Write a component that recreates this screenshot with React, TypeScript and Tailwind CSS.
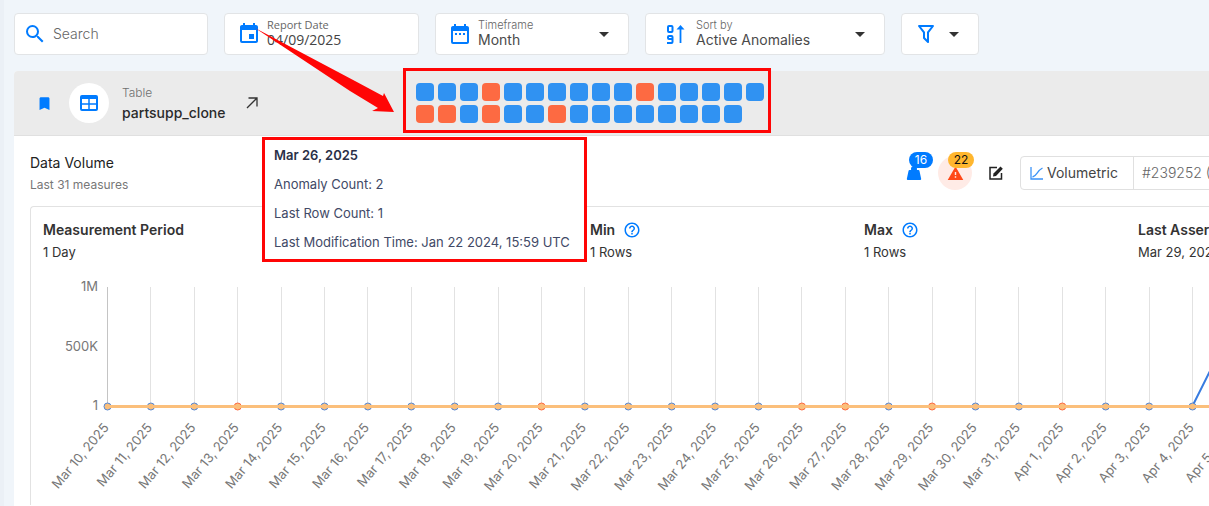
import type { ReactNode } from "react";
import {
  MdArrowDropDown,
  MdBookmark,
  MdDateRange,
  MdEvent,
  MdHelpOutline,
  MdSearch,
  MdWarning,
} from "react-icons/md";

const TOP_ROW = "bbbobbbbbbobbbbb";
const BOTTOM_ROW = "oobobbobbbbbbbb";

const DATES = [
  ...Array.from({ length: 22 }, (_, i) => `Mar ${i + 10}, 2025`),
  ...Array.from({ length: 5 }, (_, i) => `Apr ${i + 1}, 2025`),
];
const ANOMALIES = new Set([3, 10, 16, 17, 19, 22]);
const STEP = 43.4;
const pointX = (i: number) => 76.5 + i * STEP;

function Field({ className, children }: { className: string; children: ReactNode }) {
  return (
    <div
      className={`relative flex h-[42px] shrink-0 items-center rounded border border-[#e2e4e6] bg-white ${className}`}
    >
      {children}
    </div>
  );
}

function Caret() {
  return <MdArrowDropDown className="pointer-events-none size-6 shrink-0 text-[#333]" />;
}

function SortIcon() {
  return (
    <svg viewBox="0 0 20 20" className="size-5 shrink-0" fill="none" stroke="#007bff" strokeWidth="2">
      <rect x="2" y="2" width="4.500" height="6" rx="1" />
      <path d="M6.500 15H3a1 1 0 0 1-1-1v-1a1 1 0 0 1 1-1h2.500a1 1 0 0 1 1 1v5a1 1 0 0 1-1 1H1" />
      <path d="M14.500 19V3" strokeWidth="1.800" />
      <path d="M10.500 5.500L14.500 1L18.500 5.500Z" fill="#007bff" stroke="none" />
    </svg>
  );
}

function FilterIcon() {
  return (
    <svg viewBox="0 0 24 24" className="size-6 shrink-0" fill="#007bff">
      <path d="M15 19.880C15.040 20.180 14.940 20.500 14.710 20.710C14.320 21.100 13.690 21.100 13.300 20.710L9.290 16.700C9.060 16.470 8.960 16.160 9 15.870V10.750L4.210 4.620C3.870 4.190 3.950 3.560 4.380 3.220C4.570 3.080 4.780 3 5 3H19C19.220 3 19.430 3.080 19.620 3.220C20.050 3.560 20.130 4.190 19.790 4.620L15 10.750V19.880M7.040 5L11 10.060V15.580L13 17.580V10.050L16.960 5H7.040Z" />
    </svg>
  );
}

function Toolbar() {
  return (
    <div className="flex gap-4 pt-[13px]">
      <Field className="w-[194px] gap-1.5 pl-2">
        <MdSearch className="size-6 shrink-0 text-[#007bff]" />
        <input
          type="search"
          aria-label="Search"
          placeholder="Search"
          className="w-full min-w-0 bg-transparent text-sm font-light outline-none placeholder:text-[#666]"
        />
      </Field>
      <Field className="w-[195px] gap-1.5 pl-3">
        <MdEvent className="size-6 shrink-0 text-[#007bff]" />
        <div className="flex min-w-0 flex-col font-['Open_Sans',sans-serif]">
          <label htmlFor="date" className="text-[11px] leading-3 text-[#666]">
            Report Date
          </label>
          <input
            id="date"
            defaultValue="04/09/2025"
            className="h-[18px] w-full bg-transparent text-sm text-[#444] outline-none"
          />
        </div>
      </Field>
      <Field className="w-[194px] gap-1.5 pr-3 pl-3">
        <MdDateRange className="size-6 shrink-0 text-[#007bff]" />
        <div className="flex min-w-0 grow flex-col">
          <label htmlFor="timeframe" className="text-[11px] leading-3 font-light text-[#666]">
            Timeframe
          </label>
          <select
            id="timeframe"
            className="h-[18px] appearance-none bg-transparent text-sm leading-[18px] text-[#4a4a4a] outline-none"
          >
            <option>Month</option>
          </select>
        </div>
        <Caret />
      </Field>
      <Field className="w-[240px] gap-2.5 pr-3 pl-5">
        <SortIcon />
        <div className="flex min-w-0 grow flex-col">
          <label htmlFor="sort" className="text-[11px] leading-3 font-light text-[#666]">
            Sort by
          </label>
          <select
            id="sort"
            className="h-[18px] appearance-none bg-transparent text-sm leading-[18px] text-[#4a4a4a] outline-none"
          >
            <option>Active Anomalies</option>
          </select>
        </div>
        <Caret />
      </Field>
      <button
        aria-label="Filter"
        className="flex h-[42px] w-[78px] shrink-0 items-center justify-center gap-1 rounded border border-[#e2e4e6] bg-white"
      >
        <FilterIcon />
        <Caret />
      </button>
    </div>
  );
}

function Heatmap() {
  return (
    <div className="relative grid shrink-0 grid-cols-16 gap-1">
      {(TOP_ROW + BOTTOM_ROW).split("").map((c, i) => (
        <span key={i} className={`size-[18px] rounded ${c === "o" ? "bg-[#fd6a42]" : "bg-[#3092f2]"}`} />
      ))}
      <div className="pointer-events-none absolute -top-[15px] -right-[7px] -bottom-[10px] -left-[13px] border-[3px] border-[#ff0505]" />
    </div>
  );
}

function TableHeader() {
  return (
    <header className="flex h-[65px] items-center rounded-tl border-b border-[#e0e0e0] bg-[#ebebeb] pl-[22px]">
      <div className="flex w-[380px] shrink-0 items-center">
        <button aria-label="Bookmark">
          <MdBookmark className="size-[17px] text-[#007bff]" />
        </button>
        <div className="ml-4 flex size-10 items-center justify-center rounded-full bg-white">
          <svg viewBox="0 0 18 16" className="h-4 w-[18px]" fill="none" stroke="#007bff" strokeWidth="2">
            <rect x="1" y="1" width="16" height="14" rx="1" />
            <path d="M1 2.500H17" strokeWidth="3" />
            <path d="M1 9H17M9 4V15" strokeWidth="1.500" />
          </svg>
        </div>
        <div className="ml-[13px] flex flex-col">
          <span className="text-xs leading-5 font-light text-[#707070]">Table</span>
          <span className="text-sm leading-5 font-medium text-[#2a2a2a]">partsupp_clone</span>
        </div>
        <a href="#open" aria-label="Open table" className="ml-5">
          <svg viewBox="0 0 12 12" className="size-3" fill="none" stroke="#333" strokeWidth="1.300">
            <path d="M1 11L11 1M2.500 1H11V9.500" />
          </svg>
        </a>
      </div>
      <Heatmap />
    </header>
  );
}

function Actions() {
  return (
    <div className="flex shrink-0 items-center whitespace-nowrap">
      <button aria-label="16 checks" className="relative shrink-0">
        <svg viewBox="0 0 16 16" className="size-4" fill="#007bff">
          <path d="M3.500 5H12.500Q13.300 5 13.500 6L15.200 14Q15.200 15 14.200 15H1.800Q0.800 15 0.800 14L2.500 6Q2.700 5 3.500 5ZM8 1A3 3 0 1 1 8 7A3 3 0 1 1 8 1Z" />
        </svg>
        <span className="absolute -top-[13px] left-[3px] flex h-4 w-6 items-center justify-center rounded-full bg-[#007bff] text-xs text-white">
          16
        </span>
      </button>
      <button
        aria-label="22 anomalies"
        className="relative ml-4 flex size-[34px] shrink-0 items-center justify-center rounded-full bg-[#ffebe6]"
      >
        <MdWarning className="size-[17px] text-[#ff4817]" />
        <span className="absolute -top-1 left-2.5 flex h-4 w-[26px] items-center justify-center rounded-full bg-[#ffb62e] text-xs text-[#111]">
          22
        </span>
      </button>
      <button aria-label="Edit" className="ml-4 shrink-0">
        <svg viewBox="0 0 16 16" className="size-4" fill="none" stroke="#222" strokeWidth="1.500">
          <path d="M9 2.500H2V14H13.500V8" />
          <path d="M5 11.500L5.500 8.500L12.500 1.500L14.800 3.800L8 11Z" fill="#222" stroke="none" />
        </svg>
      </button>
      <div className="ml-4 flex h-[34px] shrink-0 items-stretch rounded border border-[#e0e0e0] text-sm">
        <span className="flex w-[113px] items-center gap-1 border-r border-[#e0e0e0] pl-[9px] text-[#444]">
          <svg viewBox="0 0 13 13" className="size-[13px] shrink-0" fill="none" stroke="#3b93f7" strokeWidth="1.300">
            <path d="M1 0V12H13M2.500 10C7 9 6.500 4 12.500 1" />
          </svg>
          Volumetric
        </span>
        <span className="flex items-center px-2 font-light text-[#666]">#239252 (Active)</span>
      </div>
    </div>
  );
}

function Stat({ label, value, help }: { label: string; value: string; help?: boolean }) {
  return (
    <div className="w-[274px] shrink-0">
      <dt className="flex items-center gap-2 text-sm leading-5 font-semibold text-[#333]">
        {label}
        {help && <MdHelpOutline className="size-[18px] text-[#007bff]" />}
      </dt>
      <dd className="text-[13px] leading-6 text-[#333]">{value}</dd>
    </div>
  );
}

function Chart() {
  const end = pointX(25);
  return (
    <svg width="1400" height="236" className="block font-['Inter',sans-serif]" role="img" aria-label="Row count by day">
      {DATES.map((d, i) => (
        <path
          key={d}
          d={`M${Math.floor(pointX(i)) + 0.5} 18V137`}
          stroke={i === 0 ? "#c4c4c4" : "#e2e2e2"}
        />
      ))}
      <g fill="#777" fontSize="13" textAnchor="end">
        <text x="67" y="22">1M</text>
        <text x="67" y="82">500K</text>
        <text x="67" y="141">1</text>
      </g>
      <path d={`M76 137H${end}L${pointX(26)} 50`} fill="none" stroke="#377be0" strokeWidth="2" />
      {DATES.slice(0, 26).map((d, i) => (
        <circle
          key={d}
          cx={pointX(i)}
          cy="137.500"
          r="3.500"
          fill="#fbbf7b"
          stroke={ANOMALIES.has(i) ? "#fd6a42" : "#5387d6"}
        />
      ))}
      <path d="M76 137.500H1400" stroke="#fbbf7b" strokeWidth="3" />
      <g fill="#777" fontSize="13" textAnchor="end">
        {DATES.map((d, i) => (
          <text key={d} transform={`translate(${pointX(i) + 2} 159) rotate(-50)`}>
            {d}
          </text>
        ))}
      </g>
    </svg>
  );
}

function Tooltip() {
  return (
    <div
      role="tooltip"
      className="absolute top-[137px] left-[262px] h-[125px] w-[325px] border-[3px] border-[#ff0505] bg-white py-px pl-[9px] text-[13px] leading-[29px] whitespace-nowrap text-[#414966]"
    >
      <p className="font-semibold text-[#2a3047]">Mar 26, 2025</p>
      <p>Anomaly Count: 2</p>
      <p>Last Row Count: 1</p>
      <p>Last Modification Time: Jan 22 2024, 15:59 UTC</p>
    </div>
  );
}

export default function App() {
  return (
    <div className="relative flex h-screen flex-col overflow-hidden border-l-4 border-[#ebf0f6] bg-[#f0f5fa] pl-2.5 font-['Inter',sans-serif]">
      <Toolbar />
      <main className="mt-4 grow rounded-tl bg-white">
        <TableHeader />
        <section className="pl-4">
          <div className="flex h-[70px] pt-[15px]">
            <div className="w-[876px] shrink-0">
              <h2 className="text-sm leading-6 text-[#222]">Data Volume</h2>
              <p className="text-xs leading-5 text-[#777]">Last 31 measures</p>
            </div>
            <div className="pt-[5px]">
              <Actions />
            </div>
          </div>
          <div className="rounded-tl border-t border-l border-[#e2e2e2]">
            <dl className="flex h-[62px] pt-[13px] pl-3">
              <Stat label="Measurement Period" value="1 Day" />
              <div className="w-[273px] shrink-0" />
              <Stat label="Min" value="1 Rows" help />
              <Stat label="Max" value="1 Rows" help />
              <Stat label="Last Assertion" value="Mar 29, 2025" />
            </dl>
            <Chart />
          </div>
        </section>
      </main>
      <div className="pointer-events-none absolute inset-0 -left-1">
        <Tooltip />
        <svg viewBox="0 0 160 100" width="160" height="100" className="absolute top-5 left-60" fill="#ff0505">
          <path d="M15 8L115 61L143 76L144 73L154 92L132 91L138 88L110 71Z" />
        </svg>
      </div>
    </div>
  );
}
